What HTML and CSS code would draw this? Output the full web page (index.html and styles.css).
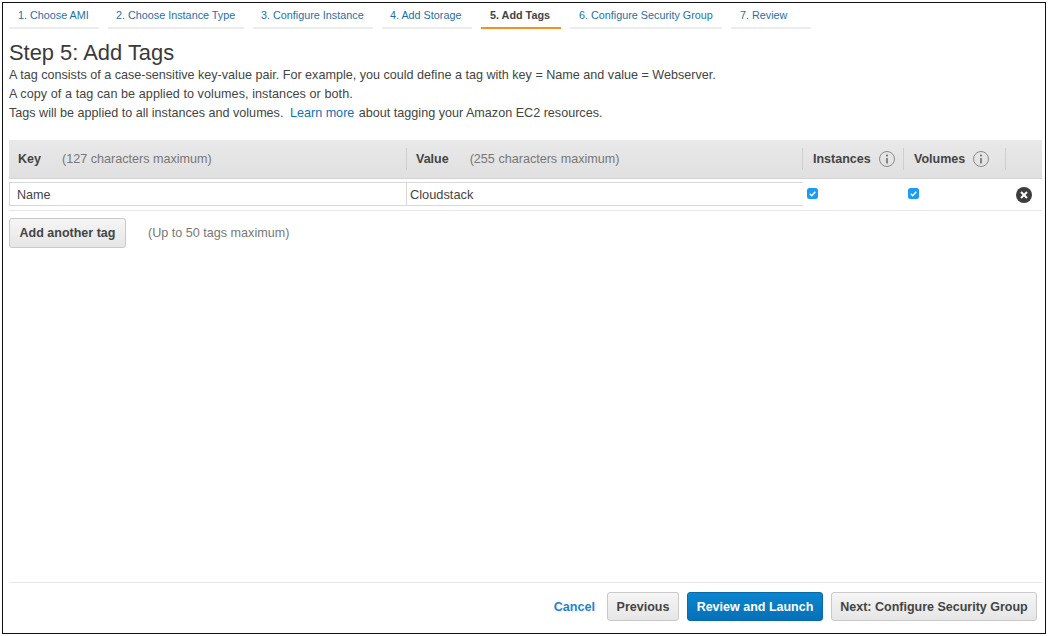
FILE: index.html
```html
<!DOCTYPE html>
<html lang="en">
  <head>
    <meta charset="UTF-8" />
    <title>Step 5: Add Tags</title>
    <link rel="stylesheet" href="styles.css">
  </head>
  <body>
    <div class="frame">
      <ul class="steps">
        <li class="step s1"><a>1. Choose AMI</a></li>
        <li class="step s2"><a>2. Choose Instance Type</a></li>
        <li class="step s3"><a>3. Configure Instance</a></li>
        <li class="step s4"><a>4. Add Storage</a></li>
        <li class="step s5 active"><a>5. Add Tags</a></li>
        <li class="step s6"><a>6. Configure Security Group</a></li>
        <li class="step s7"><a>7. Review</a></li>
      </ul>

      <div class="content">
        <h1>Step 5: Add Tags</h1>
        <p>A tag consists of a case-sensitive key-value pair. For example, you could define a tag with key = Name and value = Webserver.</p>
        <p class="copy-line">A copy of a tag can be applied to volumes, instances or both.</p>
        <p>Tags will be applied to all instances and volumes. <a class="link">Learn more</a> about tagging your Amazon EC2 resources.</p>

        <div class="tag-head">
          <div class="col-key"><b>Key</b><span class="hint">(127 characters maximum)</span></div>
          <div class="col-value sep"><b>Value</b><span class="hint">(255 characters maximum)</span></div>
          <div class="col-inst sep">
            <b>Instances</b>
            <svg class="info" viewBox="0 0 16 16"><circle cx="8" cy="8" r="7.5" fill="none" stroke="#8a8a8a" stroke-width="1"/><circle cx="8" cy="4.6" r="1" fill="#666"/><path d="M8 7v5.4" stroke="#666" stroke-width="1.5" fill="none"/></svg>
          </div>
          <div class="col-vol sep">
            <b>Volumes</b>
            <svg class="info" viewBox="0 0 16 16"><circle cx="8" cy="8" r="7.5" fill="none" stroke="#8a8a8a" stroke-width="1"/><circle cx="8" cy="4.6" r="1" fill="#666"/><path d="M8 7v5.4" stroke="#666" stroke-width="1.5" fill="none"/></svg>
          </div>
          <div class="col-del sep"></div>
        </div>

        <div class="tag-row">
          <div class="field col-key key-field">Name</div>
          <div class="field col-value value-field">Cloudstack</div>
          <div class="col-inst check-cell">
            <svg class="check" viewBox="0 0 11 11"><rect width="11" height="11" rx="2.5" fill="#1a9bf5"/><path d="M2.8 5.8l1.9 1.9 3.6-4" fill="none" stroke="#fff" stroke-width="1.5"/></svg>
          </div>
          <div class="col-vol check-cell">
            <svg class="check" viewBox="0 0 11 11"><rect width="11" height="11" rx="2.5" fill="#1a9bf5"/><path d="M2.8 5.8l1.9 1.9 3.6-4" fill="none" stroke="#fff" stroke-width="1.5"/></svg>
          </div>
          <div class="col-del del-cell">
            <svg class="remove" viewBox="0 0 16 16"><circle cx="8" cy="8" r="8" fill="#3d3d3d"/><path d="M5 5l6 6M11 5l-6 6" stroke="#fff" stroke-width="2"/></svg>
          </div>
        </div>

        <div class="add-row">
          <button class="btn add-btn">Add another tag</button>
          <span class="hint">(Up to 50 tags maximum)</span>
        </div>
      </div>

      <div class="footer">
        <a class="cancel">Cancel</a>
        <button class="btn prev-btn">Previous</button>
        <button class="btn primary">Review and Launch</button>
        <button class="btn next-btn">Next: Configure Security Group</button>
      </div>
    </div>
  </body>
</html>
```

FILE: styles.css
```css
* {
  font-family: "Liberation Sans", Arial, Helvetica, sans-serif;
  box-sizing: border-box;
}

html,
body {
  margin: 0;
  height: 636px;
  background: #fff;
  overflow: hidden;
}

.frame {
  margin: 2px;
  width: 1044px;
  height: 632px;
  border: 1px solid #111;
  display: flex;
  flex-direction: column;
}

.steps {
  list-style: none;
  margin: 0;
  padding: 0 0 0 6px;
  display: flex;
  gap: 9px;
  height: 26px;
}

.step {
  height: 26px;
  padding: 6px 0 0 9px;
  border-bottom: 2px solid #ececec;
  font-size: 10.8px;
  color: #1f6fa8;
}

.s1 { width: 90px; }
.s2 { width: 136px; padding-left: 8px; }
.s3 { width: 120px; padding-left: 8px; }
.s4 { width: 90px; padding-left: 8px; }
.s5 { width: 80px; }
.s6 { width: 152px; }
.s7 { width: 80px; }

.step.active {
  border-bottom-color: #f0921e;
  color: #444;
  font-weight: bold;
}

.content {
  flex: 1;
  padding: 0 3px 0 6px;
}

h1 {
  margin: 11px 0 0;
  font-size: 21.9px;
  line-height: 26px;
  font-weight: normal;
  color: #3a3a3a;
}

p {
  margin: 0;
  font-size: 12.6px;
  line-height: 19px;
  color: #444;
}

.copy-line {
  letter-spacing: 0.07px;
}

.link {
  color: #0f6fb8;
  margin: 0 1px 0 3px;
}

.tag-head {
  margin-top: 17px;
  height: 39px;
  display: flex;
  align-items: center;
  background: linear-gradient(#e9e9e9, #e0e0e0);
  border-bottom: 1px solid #d4d4d4;
  font-size: 12.5px;
  color: #444;
}

.col-key { width: 397px; flex: none; }
.col-value { width: 397px; flex: none; }
.col-inst { width: 101px; flex: none; }
.col-vol { width: 102px; flex: none; }
.col-del { flex: 1; }

.tag-head > div {
  height: 22px;
  display: flex;
  align-items: center;
  padding-left: 9px;
}

.tag-head .sep {
  border-left: 1px solid #cfcfcf;
}

.tag-head .col-value {
  width: 396px;
}

.tag-head .col-inst,
.tag-head .col-vol {
  padding-left: 10px;
}

.hint {
  margin-left: 21px;
  color: #777;
  font-size: 12.6px;
}

.info {
  width: 16px;
  height: 16px;
  margin-left: 8px;
}

.tag-row {
  height: 32px;
  padding-top: 3px;
  display: flex;
  border-bottom: 1px solid #e6e6e6;
  font-size: 12.6px;
  color: #444;
}

.field {
  height: 24px;
  line-height: 24px;
  border: 1px solid #d8d8d8;
  padding-left: 7px;
}

.key-field {
  width: 398px;
  line-height: 25px;
}

.value-field {
  width: 396px;
  border-left: none;
  border-right: none;
  padding-left: 3px;
  font-size: 12.8px;
}

.check-cell {
  padding: 6px 0 0 4px;
}

.check {
  display: block;
  width: 11px;
  height: 11px;
}

.del-cell {
  padding: 5px 0 0 10px;
}

.remove {
  display: block;
  width: 16px;
  height: 16px;
}

.add-row {
  margin-top: 7px;
  display: flex;
  align-items: center;
}

.add-row .hint {
  margin-left: 22px;
}

.btn {
  height: 29px;
  padding: 0;
  border: 1px solid #c9c9c9;
  border-radius: 3px;
  background: linear-gradient(#f5f5f5, #e6e6e6);
  font-size: 12.5px;
  font-weight: bold;
  color: #444;
}

.add-btn {
  width: 117px;
  height: 30px;
}

.footer {
  margin: 0 3px 1px 6px;
  padding: 9px 5px 0 0;
  height: 50px;
  border-top: 1px solid #e8e8e8;
  display: flex;
  justify-content: flex-end;
  align-items: flex-start;
  gap: 8px;
}

.cancel {
  font-size: 12.6px;
  font-weight: bold;
  color: #1e82d2;
  line-height: 30px;
  margin-right: 4px;
}

.prev-btn { width: 72px; }
.next-btn { width: 206px; }

.primary {
  width: 136px;
  background: linear-gradient(#0a86cf, #0670b8);
  border-color: #0a6aa8;
  color: #fff;
}
```
